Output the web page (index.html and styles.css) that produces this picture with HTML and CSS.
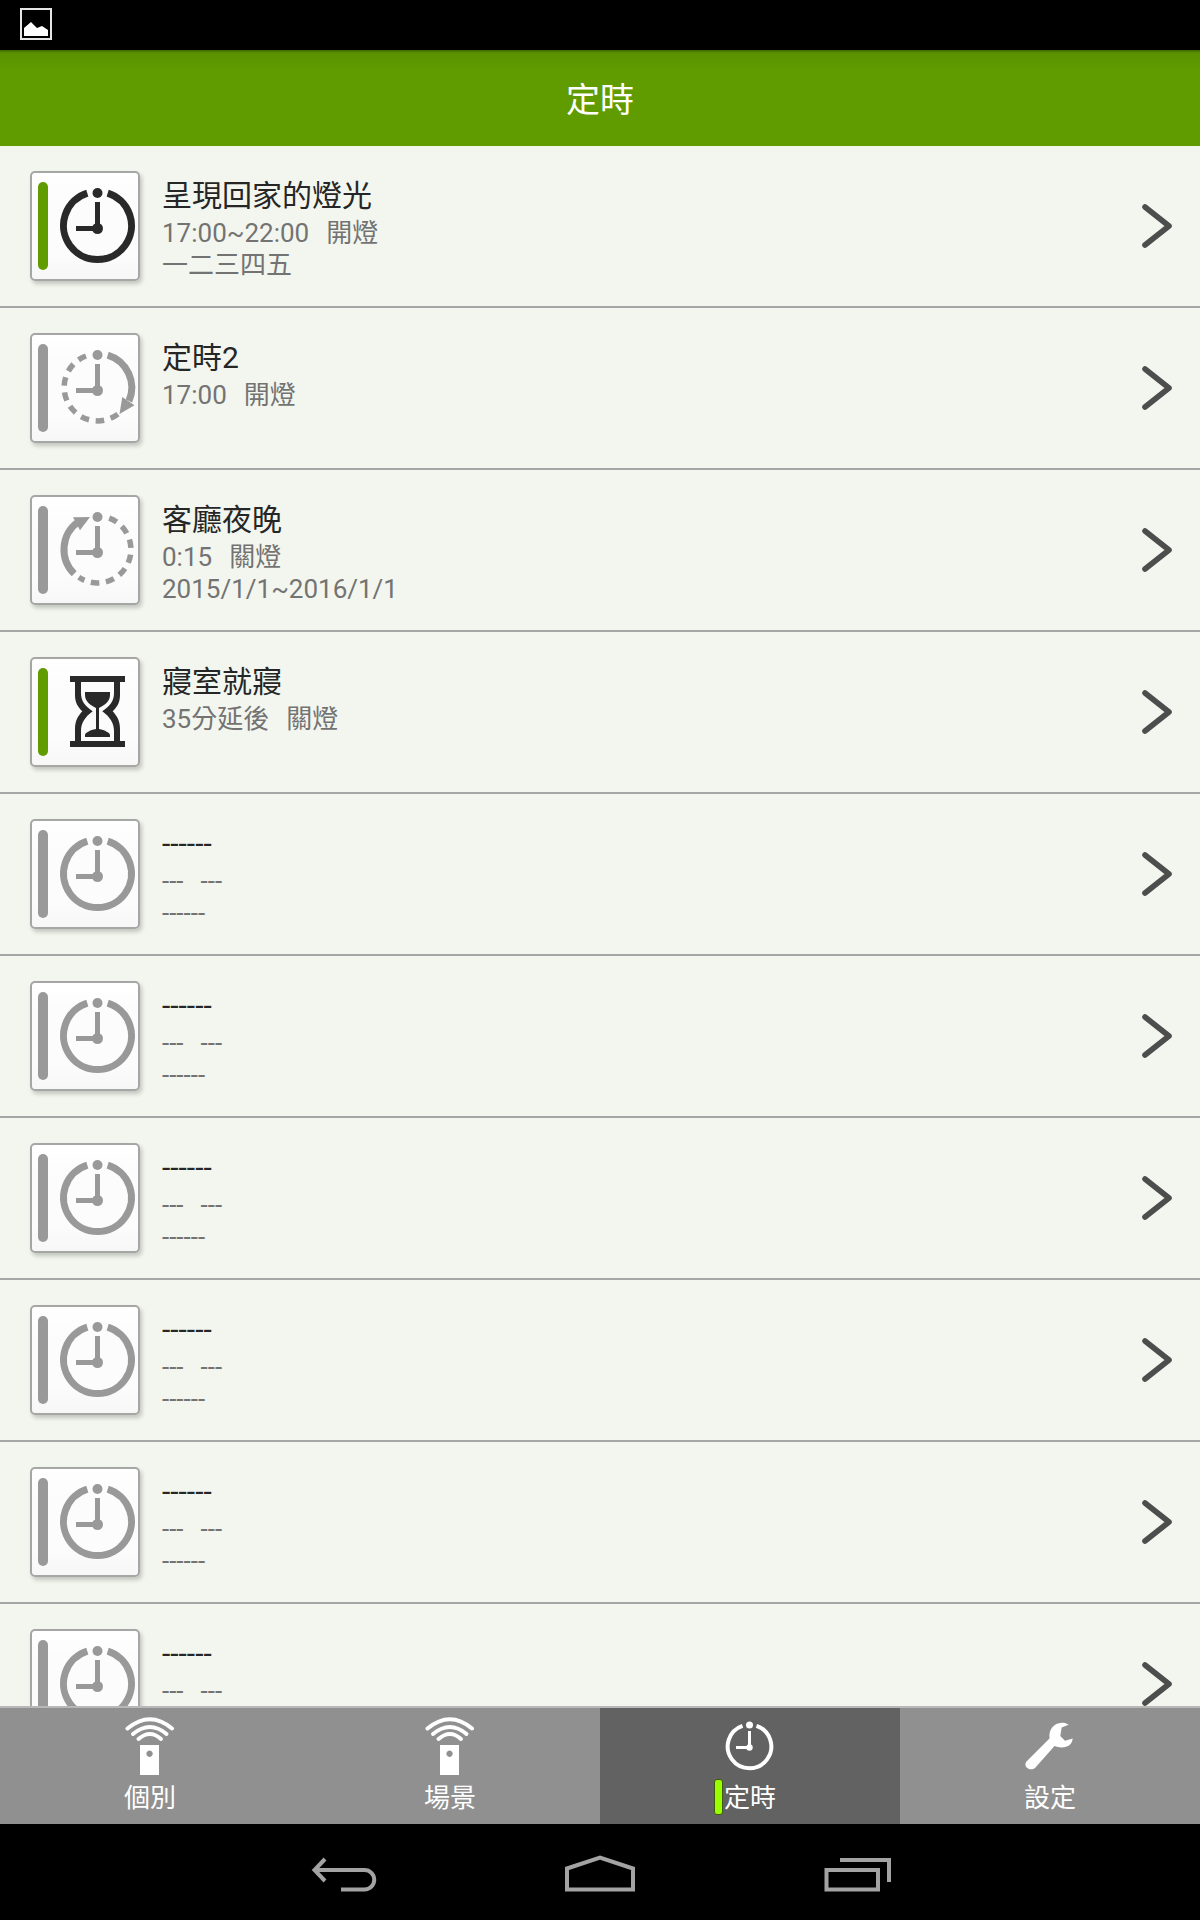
FILE: index.html
```html
<!DOCTYPE html>
<html lang="zh-Hant">
<head>
    <meta charset="UTF-8">
    <meta name="viewport" content="width=device-width, initial-scale=1.0">
    <title>定時</title>
    <link rel="stylesheet" href="styles.css">
</head>
<body>
<!-- shared icons -->
<svg class="sprite" aria-hidden="true">
    <symbol id="hands" viewBox="0 0 110 110">
        <circle cx="67.5" cy="22" r="5" fill="currentColor"/>
        <circle cx="67.5" cy="57.5" r="5.5" fill="currentColor"/>
        <path d="M67.5 31V57.5H46" fill="none" stroke="currentColor" stroke-width="5"/>
    </symbol>
    <symbol id="clock" viewBox="0 0 110 110">
        <use href="#hands"/>
        <path d="M77.7 22.1A34 34 0 1 1 57.3 22.1" fill="none" stroke="currentColor" stroke-width="7"/>
    </symbol>
    <symbol id="clock-on" viewBox="0 0 110 110">
        <use href="#hands"/>
        <path d="M77.7 22.1A34 34 0 0 1 99 68" fill="none" stroke="currentColor" stroke-width="7"/>
        <path d="M92.3 64L104.5 72.3L89.5 81Z" fill="currentColor"/>
        <path d="M87.9 81.1A33.5 33.5 0 1 1 56 23" fill="none" stroke="currentColor" stroke-width="5.5" stroke-dasharray="8.5 6.7"/>
    </symbol>
    <symbol id="clock-off" viewBox="0 0 110 110">
        <use href="#hands"/>
        <path d="M44.2 78.8A34 34 0 0 1 48 27" fill="none" stroke="currentColor" stroke-width="7"/>
        <path d="M43 22.3L60 22L50 35.3Z" fill="currentColor"/>
        <path d="M79.2 23.1A33.5 33.5 0 1 1 48.8 82.3" fill="none" stroke="currentColor" stroke-width="5.5" stroke-dasharray="8.5 6.7"/>
    </symbol>
    <symbol id="hourglass" viewBox="0 0 110 110">
        <g fill="currentColor">
            <path d="M40 19H95V25H40ZM40 84H95V90H40Z"/>
            <path d="M45 25V38C45 46 48 50 52.3 54.3C48 59 45 64 45 72V84H51V74C51 66 55 60 62.7 54.3C55 49 51 44 51 36V25Z"/>
            <path d="M90 25V38C90 46 87 50 82.7 54.3C87 59 90 64 90 72V84H84V74C84 66 80 60 72.3 54.3C80 49 84 44 84 36V25Z"/>
            <path d="M55 35H80V38C80 44 75 48 69 51V72C75 73 80 76 80 78V80H55V78C55 76 60 73 66 72V51C60 48 55 44 55 38Z"/>
        </g>
    </symbol>
    <symbol id="chevron" viewBox="0 0 30 44">
        <path d="M3 3L27 22L3 41" fill="none" stroke="#4d4d4d" stroke-width="5.6" stroke-linecap="round" stroke-linejoin="round"/>
    </symbol>
    <symbol id="remote" viewBox="0 0 60 60">
        <g fill="none" stroke="#fff" stroke-width="4" stroke-linecap="round">
            <path d="M7.5 12.5Q30 -6 52 12.5"/>
            <path d="M13 18Q30 4 46.5 18"/>
            <path d="M18.5 23Q30 13 41 23"/>
        </g>
        <path fill="#fff" fill-rule="evenodd" d="M20 29H39V59H20ZM29.5 34.5A3.2 3.2 0 1 0 29.6 34.5Z"/>
    </symbol>
</svg>

<div class="screen">
    <div class="status-bar">
        <svg width="34" height="34" viewBox="0 0 34 34" role="img" aria-label="圖片">
            <rect x="2" y="2" width="30" height="30" fill="none" stroke="#e6e6e6" stroke-width="2"/>
            <path d="M5 29V21L12 15L18 21L23 19L29 23V29Z" fill="#fff"/>
        </svg>
    </div>

    <header class="title-bar">
        <h1>定時</h1>
    </header>

    <ul class="timer-list">
        <li>
            <a class="timer" href="#timer1">
                <span class="tile active"><svg><use href="#clock"/></svg></span>
                <span class="info">
                    <span class="name">呈現回家的燈光</span>
                    <span class="detail"><span>17:00~22:00</span> <span>開燈</span></span>
                    <span class="detail">一二三四五</span>
                </span>
                <svg class="chevron"><use href="#chevron"/></svg>
            </a>
        </li>
        <li>
            <a class="timer" href="#timer2">
                <span class="tile"><svg><use href="#clock-on"/></svg></span>
                <span class="info">
                    <span class="name">定時2</span>
                    <span class="detail"><span>17:00</span> <span>開燈</span></span>
                </span>
                <svg class="chevron"><use href="#chevron"/></svg>
            </a>
        </li>
        <li>
            <a class="timer" href="#timer3">
                <span class="tile"><svg><use href="#clock-off"/></svg></span>
                <span class="info">
                    <span class="name">客廳夜晚</span>
                    <span class="detail"><span>0:15</span> <span>關燈</span></span>
                    <span class="detail">2015/1/1~2016/1/1</span>
                </span>
                <svg class="chevron"><use href="#chevron"/></svg>
            </a>
        </li>
        <li>
            <a class="timer" href="#timer4">
                <span class="tile active"><svg><use href="#hourglass"/></svg></span>
                <span class="info">
                    <span class="name">寢室就寢</span>
                    <span class="detail"><span>35分延後</span> <span>關燈</span></span>
                </span>
                <svg class="chevron"><use href="#chevron"/></svg>
            </a>
        </li>
        <li>
            <a class="timer" href="#timer5">
                <span class="tile"><svg><use href="#clock"/></svg></span>
                <span class="info">
                    <span class="name">------</span>
                    <span class="detail"><span>---</span> <span>---</span></span>
                    <span class="detail">------</span>
                </span>
                <svg class="chevron"><use href="#chevron"/></svg>
            </a>
        </li>
        <li>
            <a class="timer" href="#timer6">
                <span class="tile"><svg><use href="#clock"/></svg></span>
                <span class="info">
                    <span class="name">------</span>
                    <span class="detail"><span>---</span> <span>---</span></span>
                    <span class="detail">------</span>
                </span>
                <svg class="chevron"><use href="#chevron"/></svg>
            </a>
        </li>
        <li>
            <a class="timer" href="#timer7">
                <span class="tile"><svg><use href="#clock"/></svg></span>
                <span class="info">
                    <span class="name">------</span>
                    <span class="detail"><span>---</span> <span>---</span></span>
                    <span class="detail">------</span>
                </span>
                <svg class="chevron"><use href="#chevron"/></svg>
            </a>
        </li>
        <li>
            <a class="timer" href="#timer8">
                <span class="tile"><svg><use href="#clock"/></svg></span>
                <span class="info">
                    <span class="name">------</span>
                    <span class="detail"><span>---</span> <span>---</span></span>
                    <span class="detail">------</span>
                </span>
                <svg class="chevron"><use href="#chevron"/></svg>
            </a>
        </li>
        <li>
            <a class="timer" href="#timer9">
                <span class="tile"><svg><use href="#clock"/></svg></span>
                <span class="info">
                    <span class="name">------</span>
                    <span class="detail"><span>---</span> <span>---</span></span>
                    <span class="detail">------</span>
                </span>
                <svg class="chevron"><use href="#chevron"/></svg>
            </a>
        </li>
        <li>
            <a class="timer" href="#timer10">
                <span class="tile"><svg><use href="#clock"/></svg></span>
                <span class="info">
                    <span class="name">------</span>
                    <span class="detail"><span>---</span> <span>---</span></span>
                </span>
                <svg class="chevron"><use href="#chevron"/></svg>
            </a>
        </li>
    </ul>

    <nav class="tabs">
        <a class="tab" href="#single">
            <svg><use href="#remote"/></svg>
            <span class="tab-label">個別</span>
        </a>
        <a class="tab" href="#scene">
            <svg><use href="#remote"/></svg>
            <span class="tab-label">場景</span>
        </a>
        <a class="tab current" href="#timer" aria-current="page">
            <svg viewBox="0 0 60 60">
                <circle cx="29.5" cy="9" r="3.5" fill="#fff"/>
                <circle cx="29.5" cy="31.5" r="3.2" fill="#fff"/>
                <path d="M29.5 15V31.5H16" fill="none" stroke="#fff" stroke-width="3"/>
                <path d="M36.5 9.8A21.8 21.8 0 1 1 22.5 9.8" fill="none" stroke="#fff" stroke-width="4"/>
            </svg>
            <span class="tab-label">定時</span>
        </a>
        <a class="tab" href="#settings">
            <svg viewBox="0 0 60 60">
                <path fill="#fff" d="M48.7 8.7C46 7 44 6.7 41.7 6.7C34 7 28.5 13 29.5 22.5L6.5 45.5C4.5 48 5.5 51 8 52.5C10.5 54 13.5 53.5 15.5 51.5L34.5 30C39 32 45 32 49 29.5C51.5 27.5 52.5 25 52.7 22.5L45 24.7L40.3 20L41.7 11.5Z"/>
            </svg>
            <span class="tab-label">設定</span>
        </a>
    </nav>

    <div class="system-bar">
        <button type="button" aria-label="返回">
            <svg viewBox="0 0 72 48">
                <path d="M17 11L6.5 22L17 33M6.5 22H56.5A9.7 9.7 0 0 1 56.5 41.5H33"/>
            </svg>
        </button>
        <button type="button" aria-label="主畫面">
            <svg viewBox="0 0 72 48">
                <path d="M3 20.5L36 9.5L69 20.5V41.5H3Z"/>
            </svg>
        </button>
        <button type="button" aria-label="最近使用">
            <svg viewBox="0 0 72 48">
                <path d="M6.5 22H58V41.5H6.5ZM20 12H69V34"/>
            </svg>
        </button>
    </div>
</div>
</body>
</html>
```

FILE: styles.css
```css
* {
    box-sizing: border-box;
}

body {
    margin: 0;
    font-family: Roboto, "Noto Sans CJK TC", sans-serif;
    background-color: #f3f6ee;
}

h1 {
    margin: 0;
    font-size: 34px;
    font-weight: normal;
    line-height: 40px;
}

a {
    color: inherit;
    text-decoration: none;
}

.sprite {
    display: none;
}

.screen {
    display: flex;
    flex-direction: column;
    height: 100vh;
}

.status-bar {
    display: flex;
    flex-shrink: 0;
    align-items: center;
    height: 50px;
    padding: 0 19px 2px;
    background-color: #000000;
}

.title-bar {
    display: flex;
    flex-shrink: 0;
    align-items: center;
    justify-content: center;
    height: 96px;
    padding-top: 4px;
    color: #ffffff;
    background: linear-gradient(#3f6800, #5a9200 3px, #609b00 20px);
}

.timer-list {
    flex: 1;
    min-height: 0;
    margin: 0;
    padding: 0;
    overflow-y: auto;
    scrollbar-width: none;
    list-style: none;
}

.timer {
    display: flex;
    align-items: center;
    gap: 22px;
    height: 162px;
    padding: 0 28px 0 30px;
    border-bottom: 2px solid #a6a6a6;
}

.tile {
    display: flex;
    width: 110px;
    height: 110px;
    border: 2px solid #a6a6a6;
    border-radius: 5px;
    color: #999999;
    background: linear-gradient(#ffffff, #fcfcfc 25%, #fcfcfc 75%, #f7f7f7);
    box-shadow: 2px 3px 4px rgba(0, 0, 0, 0.2);
}

/* on/off lamp at the left of the tile */
.tile::before {
    content: "";
    flex-shrink: 0;
    width: 10px;
    height: 88px;
    margin: 9px 0 0 6px;
    border-radius: 5px;
    background-color: #999999;
}

.tile.active {
    color: #292929;
}

.tile.active::before {
    background-color: #609b00;
}

.tile svg {
    flex-shrink: 0;
    width: 110px;
    height: 110px;
    margin: -2px 0 0 -18px;
}

.info {
    display: flex;
    flex: 1;
    flex-direction: column;
    height: 108px;
    padding-top: 3px;
}

.name {
    color: #262626;
    font-size: 30px;
    line-height: 42px;
}

.detail {
    display: flex;
    gap: 17px;
    color: #737373;
    font-size: 26px;
    line-height: 32px;
}

.chevron {
    width: 30px;
    height: 44px;
}

.tabs {
    display: flex;
    flex-shrink: 0;
    border-top: 2px solid #b8b8b8;
    background-color: #909090;
}

.tab {
    display: flex;
    flex: 1;
    flex-direction: column;
    align-items: center;
    gap: 4px;
    height: 116px;
    padding-top: 8px;
    color: #ffffff;
}

.tab.current {
    background-color: #626262;
}

.tab svg {
    width: 60px;
    height: 60px;
}

.tab-label {
    position: relative;
    font-size: 26px;
    line-height: 36px;
}

/* marker beside the selected label */
.current .tab-label::before {
    content: "";
    position: absolute;
    top: -1px;
    left: -10px;
    width: 7px;
    height: 34px;
    border: 1px solid #3f5a10;
    border-radius: 3px;
    background-color: #99ff00;
}

.system-bar {
    display: flex;
    flex-shrink: 0;
    align-items: center;
    justify-content: center;
    height: 96px;
    background-color: #000000;
}

.system-bar button {
    width: 256px;
    height: 96px;
    padding: 0;
    border: none;
    background: none;
    cursor: pointer;
}

.system-bar svg {
    display: block;
    width: 72px;
    height: 48px;
    margin: 0 auto;
    fill: none;
    stroke: #a3a3a3;
    stroke-width: 4;
}
```
